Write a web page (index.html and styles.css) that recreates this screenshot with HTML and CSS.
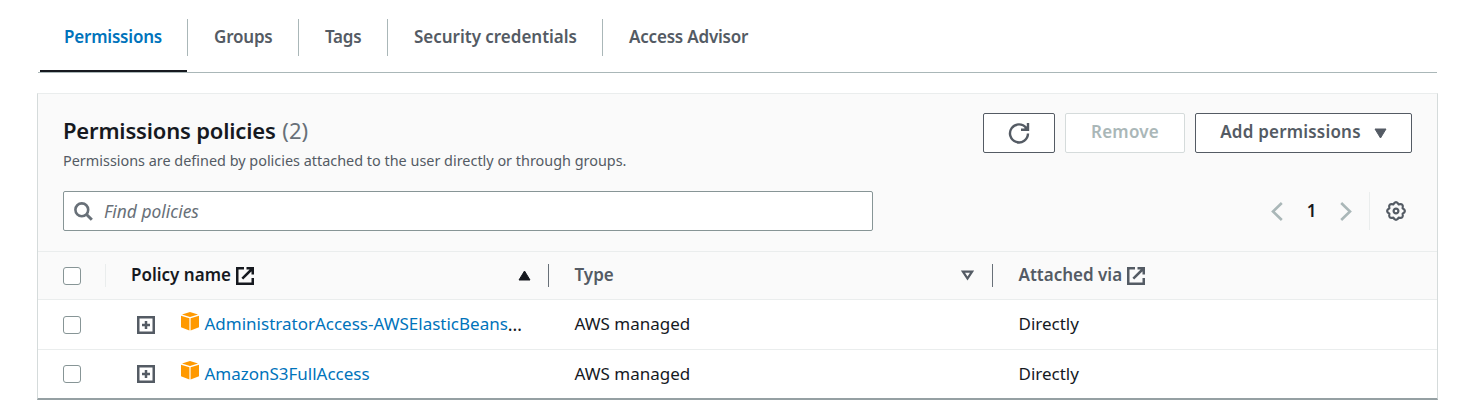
FILE: index.html
```html
<!DOCTYPE html>
<html lang="en">
<head>
<meta charset="utf-8">
<title>Permissions</title>
<link rel="stylesheet" href="styles.css">
</head>
<body>
<svg class="defs" width="0" height="0">
  <symbol id="external" viewBox="0 0 18 18"><path d="M8 1.250H1.250v15.500h15.500V11M10.500 1.250h6.250v6.250M16.500 1.500 6.300 11.700" fill="none" stroke="currentColor" stroke-width="2.500"/></symbol>
  <symbol id="expand" viewBox="0 0 18 18"><path d="M1.250 1.250h15.500v15.500H1.250zM9 5v8M5 9h8" fill="none" stroke="currentColor" stroke-width="2.500"/></symbol>
  <symbol id="box" viewBox="0 0 18 19"><path d="M9 0 17 2.400 9 5 1 2.400zM0 3.700 8.400 6.300V18.500L0 15.300zM18 3.700 9.600 6.300V18.500L18 15.300z" fill="#ff9900"/></symbol>
</svg>
<nav class="tabs">
  <a class="tab tab-active"><span class="t-permissions">Permissions</span></a>
  <a class="tab"><span class="t-groups">Groups</span></a>
  <a class="tab"><span class="t-tags">Tags</span></a>
  <a class="tab"><span class="t-security">Security credentials</span></a>
  <a class="tab"><span class="t-advisor">Access Advisor</span></a>
</nav>
<main class="panel">
  <header class="panel-head">
    <div class="heading">
      <h2 class="title"><span class="title-text">Permissions policies</span> <span class="count">(2)</span></h2>
      <p class="description">Permissions are defined by policies attached to the user directly or through groups.</p>
    </div>
    <div class="actions">
      <button class="btn btn-refresh" aria-label="Refresh"><svg width="22" height="22" viewBox="0 0 22 22"><path d="M20 11.500A9 9 0 1 1 18.200 6" fill="none" stroke="currentColor" stroke-width="2.400"/><path d="M20 1v6.800h-7" fill="none" stroke="currentColor" stroke-width="2.400"/><path d="M16 7l4-4v4z" fill="currentColor"/></svg></button>
      <button class="btn btn-remove" disabled><span>Remove</span></button>
      <button class="btn btn-add"><span>Add permissions</span><svg width="13" height="11" viewBox="0 0 13 11"><path d="M1 1h11L6.500 10z" fill="currentColor" stroke="currentColor" stroke-linejoin="round"/></svg></button>
    </div>
  </header>
  <div class="toolbar">
    <div class="search"><svg width="19" height="19" viewBox="0 0 19 19"><circle cx="7.800" cy="7.800" r="6.400" fill="none" stroke="currentColor" stroke-width="2.600"/><path d="m12.300 12.300 5.500 5.500" stroke="currentColor" stroke-width="3"/></svg><span>Find policies</span></div>
    <div class="pager">
      <svg width="12" height="19" viewBox="0 0 12 19"><path d="M10.800 1 2 9.500l8.800 8.500" fill="none" stroke="currentColor" stroke-width="2.600"/></svg>
      <span class="page">1</span>
      <svg width="12" height="19" viewBox="0 0 12 19"><path d="M1.200 1 10 9.500 1.200 18" fill="none" stroke="currentColor" stroke-width="2.600"/></svg>
      <span class="settings"><svg width="20" height="20" viewBox="-10 -10 20 20" fill="none" stroke="currentColor" stroke-width="2.200"><path d="M-2.700-6.600Q0-11.200 2.700-6.600 7.900-7.900 6.600-2.700 11.200 0 6.600 2.700 7.900 7.900 2.700 6.600 0 11.200-2.700 6.600-7.900 7.900-6.600 2.700-11.200 0-6.600-2.700-7.900-7.900-2.700-6.600z" stroke-linejoin="round"/><circle r="2.400"/></svg></span>
    </div>
  </div>
  <section class="table">
    <div class="row row-head">
      <div class="cell check"><i class="checkbox"></i></div>
      <div class="cell name sorted"><span class="label-name">Policy name</span><svg class="external" width="18" height="18"><use href="#external"/></svg><svg class="sort" width="13" height="11" viewBox="0 0 13 11"><path d="M1 10h11L6.500 1z" fill="currentColor" stroke="currentColor" stroke-linejoin="round"/></svg></div>
      <div class="cell type"><span class="label-type">Type</span><svg class="sort" width="13" height="11" viewBox="0 0 13 11"><path d="M2 1.700h9L6.500 8.500z" fill="none" stroke="currentColor" stroke-width="2.200"/></svg></div>
      <div class="cell via"><span class="label-via">Attached via</span><svg class="external" width="18" height="18"><use href="#external"/></svg></div>
    </div>
    <div class="row">
      <div class="cell check"><i class="checkbox"></i></div>
      <div class="cell name"><svg class="expand" width="18" height="18"><use href="#expand"/></svg><svg class="box" width="18" height="19"><use href="#box"/></svg><a class="link link-admin">AdministratorAccess-AWSElasticBeans</a><span class="dots">…</span></div>
      <div class="cell type"><span class="managed">AWS managed</span></div>
      <div class="cell via"><span class="directly">Directly</span></div>
    </div>
    <div class="row">
      <div class="cell check"><i class="checkbox"></i></div>
      <div class="cell name"><svg class="expand" width="18" height="18"><use href="#expand"/></svg><svg class="box" width="18" height="19"><use href="#box"/></svg><a class="link link-s3">AmazonS3FullAccess</a></div>
      <div class="cell type"><span class="managed">AWS managed</span></div>
      <div class="cell via"><span class="directly">Directly</span></div>
    </div>
  </section>
</main>
</body>
</html>
```
FILE: styles.css
```css
* { box-sizing: border-box; }
body { margin: 0; background: #fff; color: #16191f; font: 17px/24px "Noto Sans", sans-serif; white-space: nowrap; }
svg { display: block; flex: none; }
.defs { position: absolute; }
.tabs { display: flex; height: 73px; margin: 0 22px 0 38px; padding-left: 2px; border-bottom: 1px solid #aab7b8; color: #545b64; font-weight: 600; }
.tab { display: flex; height: 72px; padding: 25px 0 0 26px; background: linear-gradient(#aab7b8, #aab7b8) right 19px / 1px 37px no-repeat; }
.tab:nth-child(1) { width: 148px; padding-left: 24px; }
.tab:nth-child(2) { width: 111px; }
.tab:nth-child(3) { width: 89px; }
.tab:nth-child(4) { width: 215px; }
.tab:nth-child(5) { background: none; }
.tab-active { color: #0073bb; background: linear-gradient(#16191f, #16191f) 0 70px / 147px 2px no-repeat, linear-gradient(#aab7b8, #aab7b8) right 19px / 1px 37px no-repeat; }
.t-permissions, .t-groups, .t-tags, .t-advisor { letter-spacing: -0.2px; }
.t-security { letter-spacing: -0.02px; }
.panel { width: 1401px; height: 307px; margin: 20px 0 0 37px; border: 1px solid #d5dbdb; border-top-color: #eaeded; border-bottom: 2px solid #95a0a3; background: #fafafa; }
.panel-head { display: flex; justify-content: space-between; height: 97px; padding: 19px 25px 0; }
.title { margin: 3px 0 0; font-size: 22px; line-height: 28px; font-weight: 600; }
.title-text { letter-spacing: -0.18px; }
.count { margin-left: 1px; color: #687078; font-weight: 400; }
.description { margin: 7px 0 0; color: #545b64; font-size: 14.42px; line-height: 20px; }
.actions { display: flex; gap: 10px; }
.btn { display: flex; align-items: center; justify-content: center; height: 40px; padding: 0 0 2px; border: 1px solid #545b64; border-radius: 2px; background: #fff; color: #545b64; font: 600 17px/24px "Noto Sans", sans-serif; letter-spacing: 0.2px; }
.btn-refresh { width: 72px; padding: 0; }
.btn-remove { width: 120px; border-color: #d5dbdb; color: #aab7b8; }
.btn-add { width: 217px; gap: 13px; }
.btn-add svg { margin-top: 2px; }
.toolbar { display: flex; justify-content: space-between; height: 60px; padding: 0 25px; }
.search { display: flex; align-items: center; gap: 11px; width: 810px; height: 40px; padding-left: 10px; border: 1px solid #879596; border-radius: 2px; background: #fff; color: #687078; font-style: italic; font-size: 17.4px; }
.search span { padding-bottom: 1px; }
.pager { display: flex; align-items: center; height: 40px; color: #aab7b8; }
.page { width: 57px; padding-bottom: 1px; text-align: center; color: #16191f; font-weight: 600; }
.settings { display: flex; align-items: center; width: 43px; height: 38px; margin-left: 17px; padding-left: 16px; border-left: 1px solid #eaeded; color: #545b64; }
.row { display: grid; grid-template-columns: 67px 443.5px 444px 1fr; height: 50px; border-top: 1px solid #eaeded; background: #fff; }
.row-head { height: 48px; background: #fafafa; color: #545b64; font-weight: 600; }
.row:last-child { height: 49px; }
.cell { display: flex; align-items: center; padding-left: 26px; }
.cell > span, .link { padding-bottom: 1px; }
.check { padding-left: 25px; }
.checkbox { width: 18px; height: 18px; border: 1px solid #879596; border-radius: 3px; background: #fff; }
.row-head .cell { background: linear-gradient(#687078, #687078) right 12px / 1px 23px no-repeat; }
.row-head .check { width: 68px; background: linear-gradient(#eaeded, #eaeded) right 12px / 1px 23px no-repeat; }
.row-head .via { background: none; }
.row-head .name { width: 444px; padding-right: 18px; }
.row-head .type { width: 444.4px; padding-right: 18.500px; }
.row-head .name, .row-head .type { justify-self: start; }
.sorted { color: #16191f; }
.external { margin-left: 5px; }
.sort { margin-left: auto; }
.expand { margin-left: 6px; color: #545b64; }
.box { margin: 0 5.500px 7px 26px; }
.link { color: #0073bb; }
.link-s3 { letter-spacing: -0.01px; }
.dots { font-size: 18px; }
```
